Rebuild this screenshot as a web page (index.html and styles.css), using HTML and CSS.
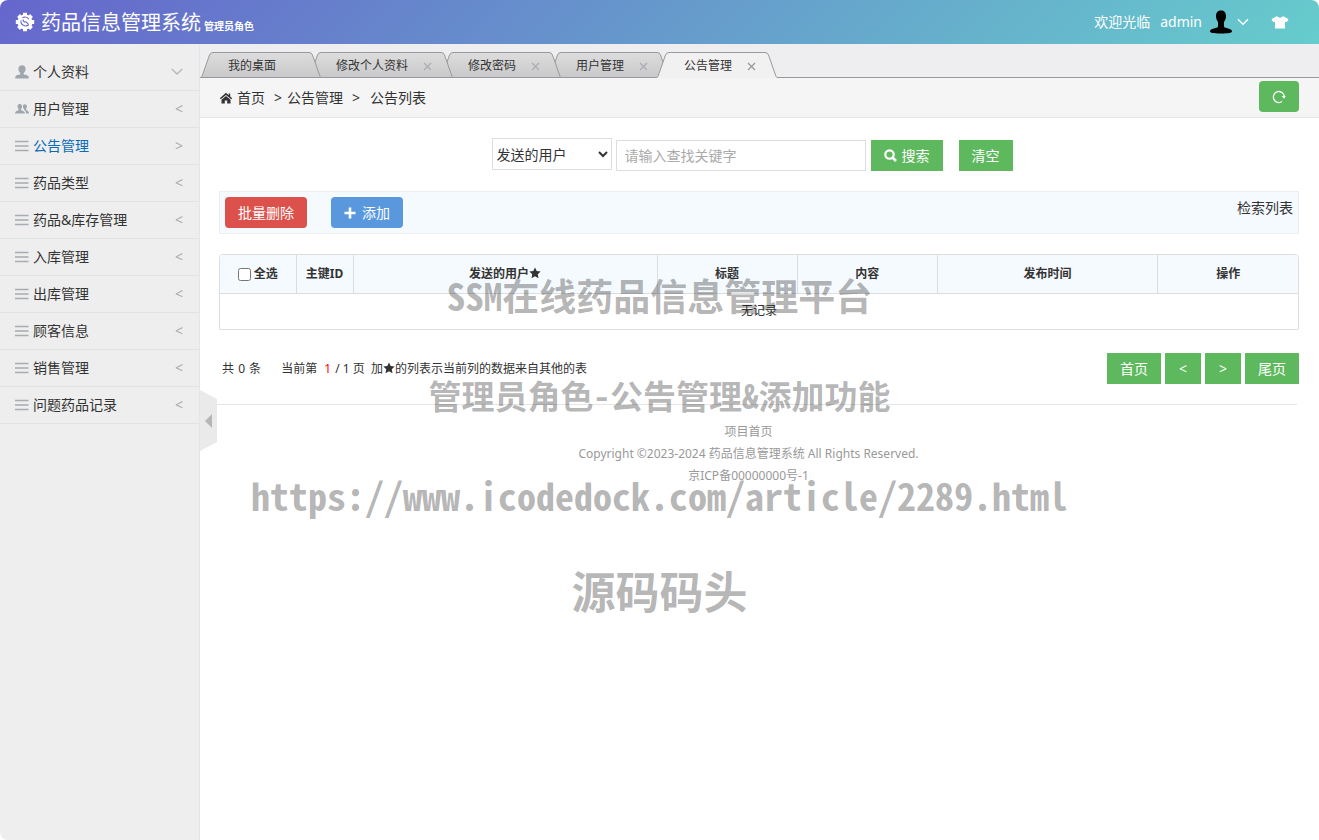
FILE: index.html
```html
<!DOCTYPE html>
<html lang="zh-CN">
<head>
<meta charset="utf-8">
<title>药品信息管理系统</title>
<link rel="stylesheet" href="styles.css">
</head>
<body>
<svg class="defs" aria-hidden="true">
  <defs>
    <linearGradient id="tab-fill" x1="0" y1="0" x2="0" y2="1"><stop offset="0" stop-color="#dddddd"/><stop offset="1" stop-color="#c9c9cb"/></linearGradient>
    <symbol id="i-bars" viewBox="0 0 14 12"><path d="M0 1.5h13.500M0 6h13.500M0 10.500h13.500" stroke="#a7acb3" stroke-width="1.400"/></symbol>
    <symbol id="i-user" viewBox="0 0 14 14"><path d="M7 .3C4.900.3 3.400 1.500 3.400 4c0 1.700.800 3.200 1.900 4v1.200C4.600 9.900.500 9.900.300 11.700V13.600h13.400v-1.900C13.500 9.900 9.400 9.900 8.700 9.200V8c1.100-.8 1.900-2.300 1.900-4C10.600 1.500 9.100.3 7 .3z"/></symbol>
    <symbol id="i-close" viewBox="0 0 9 9"><path d="M1 1l7 7M8 1L1 8" fill="none" stroke="currentColor" stroke-width="1.300"/></symbol>
    <symbol id="cap-l" viewBox="0 0 12 26"><path d="M12 0H11.500Q9.500.5 8.500 3L2 21.500Q1 25 0 25.500V26H12z" fill="url(#tab-fill)"/><path d="M12 .5Q9.500.5 8.500 3L2 21.500Q1 25 0 25.500H12" fill="none" stroke="#999"/></symbol>
    <symbol id="cap-r" viewBox="0 0 12 26"><path d="M0 0H.5Q2.500.5 3.500 3L10 21.500Q11 25 12 25.500V26H0z" fill="url(#tab-fill)"/><path d="M0 .5Q2.500.5 3.500 3L10 21.500Q11 25 12 25.500H0" fill="none" stroke="#999"/></symbol>
    <symbol id="cap-l-on" viewBox="0 0 12 26"><path d="M12 0H11.500Q9.500.5 8.500 3L2 21.500Q1 25 0 25.500V26H12z" fill="#f1f1f1"/><path d="M12 .5Q9.500.5 8.500 3L2 21.500Q1 25 0 25.500" fill="none" stroke="#999"/></symbol>
    <symbol id="cap-r-on" viewBox="0 0 12 26"><path d="M0 0H.5Q2.500.5 3.500 3L10 21.500Q11 25 12 25.500V26H0z" fill="#f1f1f1"/><path d="M0 .5Q2.500.5 3.500 3L10 21.500Q11 25 12 25.500" fill="none" stroke="#999"/></symbol>
  </defs>
</svg>
<div class="app">
  <header class="topbar">
    <svg class="logo" viewBox="0 0 20 20" aria-hidden="true">
      <circle cx="10" cy="10" r="7.500" fill="#fff"/>
      <path d="M10 .8v18.400M.8 10h18.400M3.500 3.500l13 13M16.500 3.500L3.500 16.500" stroke="#fff" stroke-width="4"/>
      <path d="M6 8.500A4.600 4.600 0 0 0 13.800 12.500M7.500 5.800A4.600 4.600 0 0 1 13.800 7.200" fill="none" stroke="#6969ca" stroke-width="1.100"/>
      <path d="M8.200 7.400a2 2 0 0 0 2.800 2.400l2.500 2.600" fill="none" stroke="#6969ca" stroke-width="1.100"/>
    </svg>
    <h1 class="title">药品信息管理系统</h1>
    <span class="role">管理员角色</span>
    <div class="account">
      <span>欢迎光临</span>
      <button class="account-name" type="button">admin
        <svg class="avatar" viewBox="0 0 22 24" aria-hidden="true"><path d="M11 .5C7.800.5 6 2.500 6 6c0 2.600.9 4.500 2 6v4.500C7.500 18.500 0 18.300 0 21.300 0 23 3 23.500 11 23.500s11-.5 11-2.200c0-3-7.500-2.800-8-4.800V12c1.100-1.500 2-3.400 2-6C16 2.500 14.200.5 11 .5z" fill="#000"/></svg>
        <svg class="caret" viewBox="0 0 12 8" aria-hidden="true"><path d="M1 1.200l5 5 5-5" fill="none" stroke="#fff" stroke-width="1.500"/></svg>
      </button>
      <button class="skin" type="button" aria-label="换肤"><svg viewBox="0 0 18 13" aria-hidden="true"><path d="M5 .5L0.500 3.200 2.300 6.200 4 5.500V12.500H14V5.500L15.700 6.200 17.500 3.200 13 .5H11.300Q9 3.200 6.700.5z" fill="#fff"/></svg></button>
    </div>
  </header>
  <div class="body">
    <nav class="sidebar">
      <a href="#" class="item"><svg class="ico" aria-hidden="true"><use href="#i-user"/></svg><span class="name">个人资料</span><svg class="down" viewBox="0 0 12 8" aria-hidden="true"><path d="M.8 1l5.200 5 5.200-5" fill="none" stroke="#b6b7b8" stroke-width="1.300"/></svg></a>
      <a href="#" class="item"><svg class="ico" viewBox="0 0 14 12" aria-hidden="true"><path d="M9.800 1.200C8.300 1.200 7.800 2.400 8 4c.1.900.5 1.400.9 1.900v.8c1 .6 2 1.200 2.100 3.800h3C14 7.800 11.600 7.500 11 6.500v-.7c.4-.4.800-1 .9-1.800.2-1.700-.6-2.800-2.100-2.800z"/><path d="M4.800 1C3.100 1 2.400 2.200 2.600 4c.1 1 .6 1.600 1 2v.9C3 7.700 0 7.700 0 10.500h10C10 7.700 6.600 7.700 6 6.900V6c.4-.4.900-1 1-2C7.200 2.200 6.500 1 4.800 1z"/></svg><span class="name">用户管理</span><span class="arrow">&lt;</span></a>
      <a href="#" class="item current"><svg class="ico" aria-hidden="true"><use href="#i-bars"/></svg><span class="name">公告管理</span><span class="arrow">&gt;</span></a>
      <a href="#" class="item"><svg class="ico" aria-hidden="true"><use href="#i-bars"/></svg><span class="name">药品类型</span><span class="arrow">&lt;</span></a>
      <a href="#" class="item"><svg class="ico" aria-hidden="true"><use href="#i-bars"/></svg><span class="name">药品&amp;库存管理</span><span class="arrow">&lt;</span></a>
      <a href="#" class="item"><svg class="ico" aria-hidden="true"><use href="#i-bars"/></svg><span class="name">入库管理</span><span class="arrow">&lt;</span></a>
      <a href="#" class="item"><svg class="ico" aria-hidden="true"><use href="#i-bars"/></svg><span class="name">出库管理</span><span class="arrow">&lt;</span></a>
      <a href="#" class="item"><svg class="ico" aria-hidden="true"><use href="#i-bars"/></svg><span class="name">顾客信息</span><span class="arrow">&lt;</span></a>
      <a href="#" class="item"><svg class="ico" aria-hidden="true"><use href="#i-bars"/></svg><span class="name">销售管理</span><span class="arrow">&lt;</span></a>
      <a href="#" class="item"><svg class="ico" aria-hidden="true"><use href="#i-bars"/></svg><span class="name">问题药品记录</span><span class="arrow">&lt;</span></a>
    </nav>
    <main class="main">
      <button class="collapse" type="button" aria-label="收起菜单"><svg viewBox="0 0 18 62" aria-hidden="true"><path d="M0 0L17 9V52L0 61z" fill="#eaeaea"/><path d="M5 31l7-7v14z" fill="#b6b6b6"/></svg></button>
      <div class="tabs">
        <button class="tab t1" type="button"><svg class="cap"><use href="#cap-l"/></svg><span class="face">我的桌面</span><svg class="cap"><use href="#cap-r"/></svg></button>
        <button class="tab t2" type="button"><svg class="cap"><use href="#cap-l"/></svg><span class="face">修改个人资料<svg class="x"><use href="#i-close"/></svg></span><svg class="cap"><use href="#cap-r"/></svg></button>
        <button class="tab t3" type="button"><svg class="cap"><use href="#cap-l"/></svg><span class="face">修改密码<svg class="x"><use href="#i-close"/></svg></span><svg class="cap"><use href="#cap-r"/></svg></button>
        <button class="tab t4" type="button"><svg class="cap"><use href="#cap-l"/></svg><span class="face">用户管理<svg class="x"><use href="#i-close"/></svg></span><svg class="cap"><use href="#cap-r"/></svg></button>
        <button class="tab on" type="button"><svg class="cap"><use href="#cap-l-on"/></svg><span class="face">公告管理<svg class="x"><use href="#i-close"/></svg></span><svg class="cap"><use href="#cap-r-on"/></svg></button>
      </div>
      <div class="crumbs">
        <svg class="home" viewBox="0 0 14 12" aria-hidden="true"><path d="M7 .8L.8 6.200l1 1.100L7 2.900l5.200 4.400 1-1.100-2-1.800V1.500H9.700v1.700z"/><path d="M7 3.900L2.500 7.700V11.500h3.300V8.500h2.400v3h3.300V7.700z"/></svg>
        <a href="#">首页</a><span class="sep">&gt;</span><span>公告管理</span><span class="sep wide">&gt;</span><span>公告列表</span>
        <button class="btn green round refresh" type="button" aria-label="刷新"><svg viewBox="0 0 14 14" aria-hidden="true"><path d="M10 11.500A5.500 5.500 0 1 1 12.300 6.500" fill="none" stroke="#fff" stroke-width="1.300"/><path d="M9.700 6h4.100L12 8.800z" fill="#fff"/></svg></button>
      </div>
      <section class="content">
        <form class="search">
          <select class="field" aria-label="查找字段"><option>发送的用户</option></select>
          <input class="keyword" type="text" placeholder="请输入查找关键字" aria-label="查找关键字">
          <button class="btn green" type="button"><svg class="glass" viewBox="0 0 13 13" aria-hidden="true"><circle cx="5.500" cy="5.500" r="4.200" fill="none" stroke="#fff" stroke-width="2.200"/><path d="M8.500 8.500l3.500 3.500" stroke="#fff" stroke-width="2.600"/></svg>搜索</button>
          <button class="btn green clear" type="reset">清空</button>
        </form>
        <div class="toolbar">
          <button class="btn red round" type="button">批量删除</button>
          <button class="btn blue round" type="button"><svg class="plus" viewBox="0 0 12 12" aria-hidden="true"><path d="M6 .5v11M.5 6h11" stroke="#fff" stroke-width="2.600"/></svg>添加</button>
          <span class="caption">检索列表</span>
        </div>
        <div class="frame">
        <table class="list">
          <colgroup><col class="c-check"><col class="c-id"><col class="c-user"><col class="c-std"><col class="c-std"><col><col class="c-std"></colgroup>
          <thead><tr>
            <th><label class="all"><input type="checkbox">全选</label></th>
            <th>主键ID</th>
            <th>发送的用户<svg class="star" viewBox="0 0 24 24" aria-hidden="true"><path d="M12 1l3.400 7.200 7.900 1-5.800 5.400 1.500 7.900L12 18.700 5 22.500l1.500-7.900L.7 9.200l7.900-1z"/></svg></th>
            <th>标题</th><th>内容</th><th>发布时间</th><th>操作</th>
          </tr></thead>
          <tbody><tr><td colspan="7">无记录</td></tr></tbody>
        </table>
        </div>
        <div class="pager">
          <p class="count"><span>共 <span class="num">0</span> 条</span><span>当前第 <b class="num">1</b> / 1 页&nbsp; 加<svg class="star" viewBox="0 0 24 24" aria-hidden="true"><path d="M12 1l3.400 7.200 7.900 1-5.800 5.400 1.500 7.900L12 18.700 5 22.500l1.500-7.900L.7 9.200l7.900-1z"/></svg>的列表示当前列的数据来自其他的表</span></p>
          <div class="pages">
            <button class="btn green" type="button">首页</button>
            <button class="btn green step" type="button">&lt;</button>
            <button class="btn green step" type="button">&gt;</button>
            <button class="btn green" type="button">尾页</button>
          </div>
        </div>
      </section>
      <footer class="footer">
        <p><a href="#">项目首页</a></p>
        <p>Copyright ©2023-2024 药品信息管理系统 All Rights Reserved.</p>
        <p>京ICP备00000000号-1</p>
      </footer>
    </main>
  </div>
  <div class="watermark">
    <p class="w1">SSM在线药品信息管理平台</p>
    <p class="w2">管理员角色-公告管理&amp;添加功能</p>
    <p class="w3">https://www.icodedock.com/article/2289.html</p>
    <p class="w4">源码码头</p>
  </div>
</div>
</body>
</html>
```

FILE: styles.css
```css
* { box-sizing: border-box; }
body {
  margin: 0;
  background: #fff;
  color: #333;
  font: 14px/20px "Noto Sans", "Noto Sans CJK SC", sans-serif;
}
p, h1 { margin: 0; }
a { color: inherit; text-decoration: none; }
button, input, select { font: inherit; color: inherit; }
button { border: 0; padding: 0; background: none; cursor: pointer; }
.defs { position: absolute; width: 0; height: 0; }

.app {
  position: relative;
  display: flex;
  flex-direction: column;
  min-height: 100vh;
  border-radius: 8px;
  overflow: hidden;
}

/* Top bar */
.topbar {
  display: flex;
  align-items: center;
  height: 44px;
  padding: 0 30px 0 15px;
  background: linear-gradient(135deg, #66c, #6cc);
  color: #fff;
}
.logo { width: 20px; height: 20px; margin-right: 6px; }
.title { padding-top: 2px; font-size: 20px; line-height: 42px; font-weight: 400; }
.role { margin: 8px 0 0 3px; font-size: 10px; font-weight: 700; }
.account { display: flex; align-items: center; margin-left: auto; gap: 10px; }
.account-name { display: flex; align-items: center; }
.avatar { width: 22px; height: 24px; margin-left: 8px; }
.caret { width: 12px; height: 8px; margin-left: 5px; }
.skin { display: flex; margin-left: 12px; }
.skin svg { width: 18px; height: 13px; }

/* Side menu */
.body { display: flex; flex: 1; }
.sidebar {
  flex: 0 0 200px;
  padding-top: 10px;
  border-right: 1px solid #e5e5e5;
  background: #eee;
}
.item {
  display: flex;
  align-items: center;
  height: 37px;
  padding: 0 16px 0 15px;
  border-bottom: 1px solid #e2e2e2;
}
.ico { width: 14px; height: 14px; margin-right: 4px; fill: #a0a6ae; }
.name { flex: 1; }
.arrow { color: #aaa; }
.down { width: 12px; height: 8px; }
.current .name { color: #0a6ab6; }

/* Main column */
.main { position: relative; flex: 1; min-width: 0; }
.collapse { position: absolute; left: 0; top: 346px; display: flex; }
.collapse svg { width: 18px; height: 62px; }

.tabs {
  display: flex;
  align-items: flex-end;
  height: 34px;
  padding-left: 1px;
  background: linear-gradient(#999, #999) bottom / 100% 1px no-repeat #eeeef0;
}
.tab { position: relative; display: flex; margin-right: -12px; font-size: 12px; }
.cap { width: 12px; height: 26px; }
.face {
  display: flex;
  align-items: center;
  height: 26px;
  padding: 2px 33px 0 15px;
  border-top: 1px solid #999;
  border-bottom: 1px solid #999;
  background: linear-gradient(#ddd, #c9c9cb);
}
.x { width: 9px; height: 9px; margin: 0 -24px 0 15px; color: #aaaeb3; }
.t1 { z-index: 4; }
.t2 { z-index: 3; }
.t3 { z-index: 2; }
.t4 { z-index: 1; }
.on { z-index: 5; }
.on .face { border-bottom-color: #f1f1f1; background: #f1f1f1; }
.on .x { color: #999; }

.crumbs {
  display: flex;
  align-items: center;
  height: 40px;
  padding: 0 20px 0 19px;
  border-bottom: 1px solid #e5e5e5;
  background: #f5f5f5;
}
.home { width: 14px; height: 12px; margin-right: 4px; fill: #333; }
.sep { margin: 0 5px 0 9px; }
.wide { margin-right: 10px; }
.refresh { width: 40px; margin: 0 0 2px auto; }
.refresh svg { width: 14px; height: 14px; }

.btn {
  display: flex;
  align-items: center;
  justify-content: center;
  height: 31px;
  padding: 0 13px;
  color: #fff;
}
.green { background: #5eb95e; }
.red { background: #dd514c; }
.blue { background: #5a98de; }
.round { border-radius: 4px; }

.content { padding: 20px 20px 0 19px; }
.search { display: flex; align-items: flex-start; justify-content: center; padding-right: 14px; }
.field {
  width: 120px;
  height: 32px;
  margin-right: 4px;
  border: 1px solid #ddd;
  background: #fff;
}
.keyword {
  width: 250px;
  height: 31px;
  margin: 2px 5px 0 0;
  padding: 0 8px;
  border: 1px solid #ddd;
}
.keyword::placeholder { color: #aaa; }
.search .btn { margin-top: 2px; }
.search .clear { margin-left: 16px; }
.glass { width: 13px; height: 13px; margin-right: 5px; }
.plus { width: 12px; height: 12px; margin-right: 6px; }

.toolbar {
  display: flex;
  gap: 24px;
  margin: 20px 0;
  padding: 5px;
  border: 1px solid #eee;
  background: #f5fafe;
}
.toolbar .caption { margin: 0 0 0 auto; padding-top: 1px; }

.frame { border: 1px solid #ddd; border-radius: 4px 4px 2px 2px; overflow: hidden; }
.list {
  width: 100%;
  table-layout: fixed;
  border-collapse: collapse;
  font-size: 12px;
  text-align: center;
}
.c-check { width: 76px; }
.c-id { width: 57px; }
.c-user { width: 304px; }
.c-std { width: 13%; }
.list th { height: 38px; padding: 1px 0 0; background: #f5fafe; border-bottom: 1px solid #ddd; }
.list th + th { border-left: 1px solid #ddd; }
.list td { height: 36px; padding: 0; }
.all { display: flex; align-items: center; justify-content: center; gap: 3px; }
.all input { width: 13px; height: 13px; margin: 0; }
.star { width: 12px; height: 12px; vertical-align: -1px; fill: #333; }

.pager { display: flex; align-items: center; margin-top: 23px; }
.count { display: flex; gap: 20px; padding-left: 3px; font-size: 12px; }
.count b { color: #f00; font-weight: 400; }
.num { margin: 0 1px; }
.count b.num { margin-left: 4px; }
.pages { display: flex; gap: 4px; margin-left: auto; }
.step { width: 36px; }

.footer {
  margin: 20px 22px 0 17px;
  padding: 16px 17px 0 0;
  border-top: 1px solid #e5e5e5;
  color: #999;
  font-size: 12px;
  line-height: 22px;
  text-align: center;
}

/* Site watermark laid over the whole page */
.watermark {
  position: absolute;
  inset: 0;
  z-index: 10;
  padding-top: 245px;
  color: rgba(0, 0, 0, .3);
  font-family: "Noto Sans Mono CJK SC", "Noto Sans CJK SC", sans-serif;
  font-weight: 700;
  line-height: 100px;
  text-align: center;
  white-space: nowrap;
  pointer-events: none;
}
.w1 { font-size: 37px; }
.w2 { font-size: 33px; }
.w3 { font-size: 38px; }
.w4 { font-size: 44px; line-height: 90px; }
```
